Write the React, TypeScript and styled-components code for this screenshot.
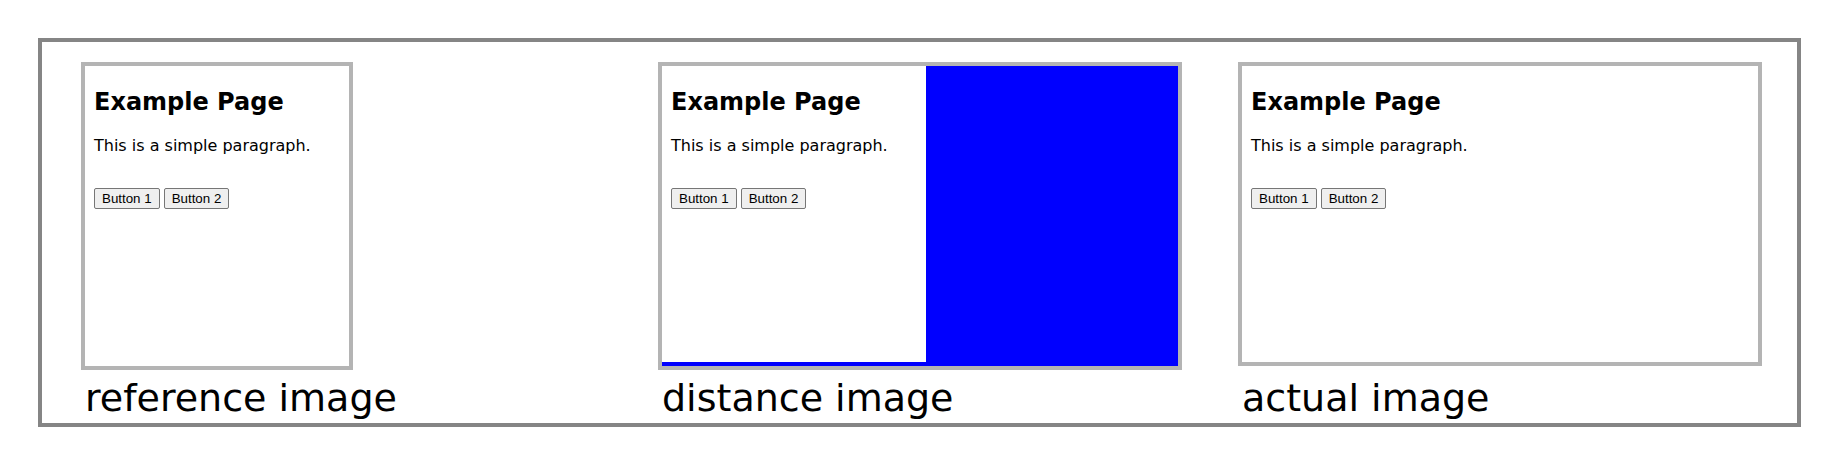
import styled, { createGlobalStyle } from 'styled-components';

const GlobalStyle = createGlobalStyle`
  html,
  body {
    margin: 0;
    padding: 0;
    background: #ffffff;
  }

  body {
    font-family: 'DejaVu Sans', Verdana, sans-serif;
    color: #000000;
  }
`;

const Page = styled.div`
  width: 1840px;
  height: 466px;
  box-sizing: border-box;
  padding: 38px;
`;

const Frame = styled.div`
  width: 1763px;
  height: 389px;
  box-sizing: border-box;
  border: 4px solid #858585;
  padding: 20px 0 0 39px;
  display: grid;
  grid-template-columns: 577px 580px 524px;
  grid-template-rows: auto auto;
  align-items: start;
`;

const Panel = styled.div<{ $w: number; $h: number; $diff?: boolean }>`
  width: ${(p) => p.$w}px;
  height: ${(p) => p.$h}px;
  border: 4px solid #b4b4b4;
  background: ${(p) => (p.$diff ? '#0000ff' : '#ffffff')};
  overflow: hidden;
`;

const Sheet = styled.div<{ $w: number; $h: number }>`
  width: ${(p) => p.$w}px;
  height: ${(p) => p.$h}px;
  box-sizing: border-box;
  padding: 0 9px;
  background: #ffffff;
  display: flex;
  flex-direction: column;
  align-items: flex-start;
  overflow: hidden;
`;

const Title = styled.h2`
  margin: 22px 0 0;
  font-family: 'DejaVu Sans', Verdana, sans-serif;
  font-size: 24px;
  font-weight: 700;
  line-height: 28px;
  white-space: nowrap;
`;

const Paragraph = styled.p`
  margin: 20px 0 0;
  font-size: 16px;
  line-height: 19px;
  white-space: nowrap;
`;

const ButtonRow = styled.div`
  margin-top: 33px;
  display: flex;
  gap: 4px;
`;

const Button = styled.button`
  height: 21px;
  padding: 0 7px;
  border: 1px solid #767676;
  border-radius: 2px;
  background: #efefef;
  color: #000000;
  font-family: 'Liberation Sans', Arial, sans-serif;
  font-size: 13.33px;
  line-height: 15px;
  white-space: nowrap;
`;

const Label = styled.div`
  margin: 3px 0 0 4px;
  font-family: 'DejaVu Sans', Verdana, sans-serif;
  font-size: 38px;
  line-height: 43px;
  color: #000000;
  white-space: nowrap;
`;

function ExamplePage({ w, h }: { w: number; h: number }) {
  return (
    <Sheet $w={w} $h={h}>
      <Title>Example Page</Title>
      <Paragraph>This is a simple paragraph.</Paragraph>
      <ButtonRow>
        <Button>Button 1</Button>
        <Button>Button 2</Button>
      </ButtonRow>
    </Sheet>
  );
}

export default function App() {
  return (
    <Page>
      <GlobalStyle />
      <Frame>
        <Panel $w={264} $h={300}>
          <ExamplePage w={264} h={300} />
        </Panel>
        <Panel $w={516} $h={300} $diff>
          <ExamplePage w={264} h={296} />
        </Panel>
        <Panel $w={516} $h={296}>
          <ExamplePage w={516} h={296} />
        </Panel>
        <Label>reference image</Label>
        <Label>distance image</Label>
        <Label>actual image</Label>
      </Frame>
    </Page>
  );
}
